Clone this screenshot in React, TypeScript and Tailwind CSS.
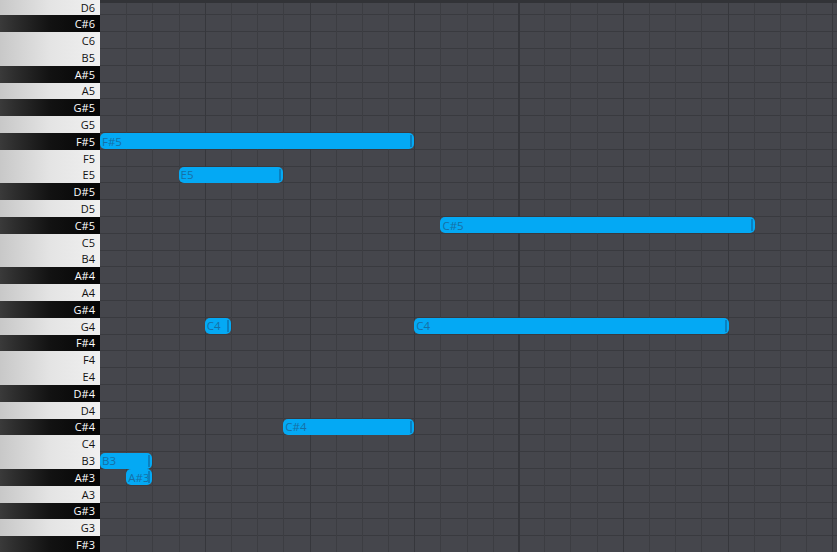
import React from 'react';

const ROW_H = 16.8;
const COL_W = 419 / 16;

const keys = [
  'D6', 'C#6', 'C6', 'B5', 'A#5', 'A5', 'G#5', 'G5', 'F#5', 'F5', 'E5', 'D#5', 'D5', 'C#5', 'C5', 'B4', 'A#4',
  'A4', 'G#4', 'G4', 'F#4', 'F4', 'E4', 'D#4', 'D4', 'C#4', 'C4', 'B3', 'A#3', 'A3', 'G#3', 'G3', 'F#3',
];

interface Note {
  pitch: string;
  label: string;
  start: number;
  end: number;
}

const notes: Note[] = [
  { pitch: 'F#5', label: 'F#5', start: 0, end: 12 },
  { pitch: 'E5', label: 'E5', start: 3, end: 7 },
  { pitch: 'C#5', label: 'C#5', start: 13, end: 25 },
  { pitch: 'G4', label: 'C4', start: 4, end: 5 },
  { pitch: 'G4', label: 'C4', start: 12, end: 24 },
  { pitch: 'C#4', label: 'C#4', start: 7, end: 12 },
  { pitch: 'B3', label: 'B3', start: 0, end: 2 },
  { pitch: 'A#3', label: 'A#3', start: 1, end: 2 },
];

const cols = Array.from({ length: 29 }, (_, i) => i);

function PianoKey({ name }: { name: string }) {
  const black = name.includes('#');
  return (
    <div
      className={`h-[16.8px] shrink-0 flex items-center justify-end pr-[5px] text-[11px] leading-none ${
        black
          ? 'bg-gradient-to-r from-[#3a3a3a] via-[#121212] to-[#050505] text-white'
          : 'bg-gradient-to-r from-[#c8c8c8] via-[#e4e4e4] to-[#f0f0f0] text-[#111]'
      }`}
    >
      {name}
    </div>
  );
}

export default function App() {
  return (
    <div
      className="w-[837px] h-[552px] overflow-hidden flex bg-[#45464c]"
      style={{ fontFamily: '"Open Sans", "Noto Sans", sans-serif' }}
    >
      {/* Keyboard */}
      <div className="w-[100px] shrink-0 flex flex-col mt-[-1.4px]">
        {keys.map((k) => (
          <PianoKey key={k} name={k} />
        ))}
      </div>

      {/* Grid */}
      <div className="relative flex-1 overflow-hidden">
        <div className="flex flex-col mt-[-1.4px] relative">
          {keys.map((k) => (
            <div key={k} className="h-[16.8px] shrink-0 border-b border-[#393a3f]" />
          ))}

          {/* vertical lines */}
          <div className="absolute inset-0 flex">
            {cols.map((c) => (
              <div
                key={c}
                className={`w-[26.1875px] shrink-0 ${
                  c === 0
                    ? ''
                    : c % 16 === 0
                    ? 'border-l-2 border-[#34353a] -ml-[1px]'
                    : c % 4 === 0
                    ? 'border-l border-[#36373c]'
                    : 'border-l border-[#3c3d42]'
                }`}
              />
            ))}
          </div>

          {/* notes */}
          {notes.map((n, i) => {
            const row = keys.indexOf(n.pitch);
            return (
              <div
                key={i}
                className="absolute flex items-center rounded-[5px] bg-[#04a9f4] text-[11.5px] leading-none text-[#1670a6] pl-[2px] overflow-hidden"
                style={{
                  left: n.start * COL_W,
                  width: (n.end - n.start) * COL_W,
                  top: row * ROW_H + 0.4,
                  height: ROW_H - 0.8,
                }}
              >
                <span className="whitespace-nowrap">{n.label}</span>
                <div className="absolute right-[2px] top-[2px] bottom-[2px] w-[2px] bg-[#0a80c0]" />
              </div>
            );
          })}
        </div>
        <div className="absolute top-0 left-0 right-0 h-[3px] bg-[#323337]" />
      </div>
    </div>
  );
}
